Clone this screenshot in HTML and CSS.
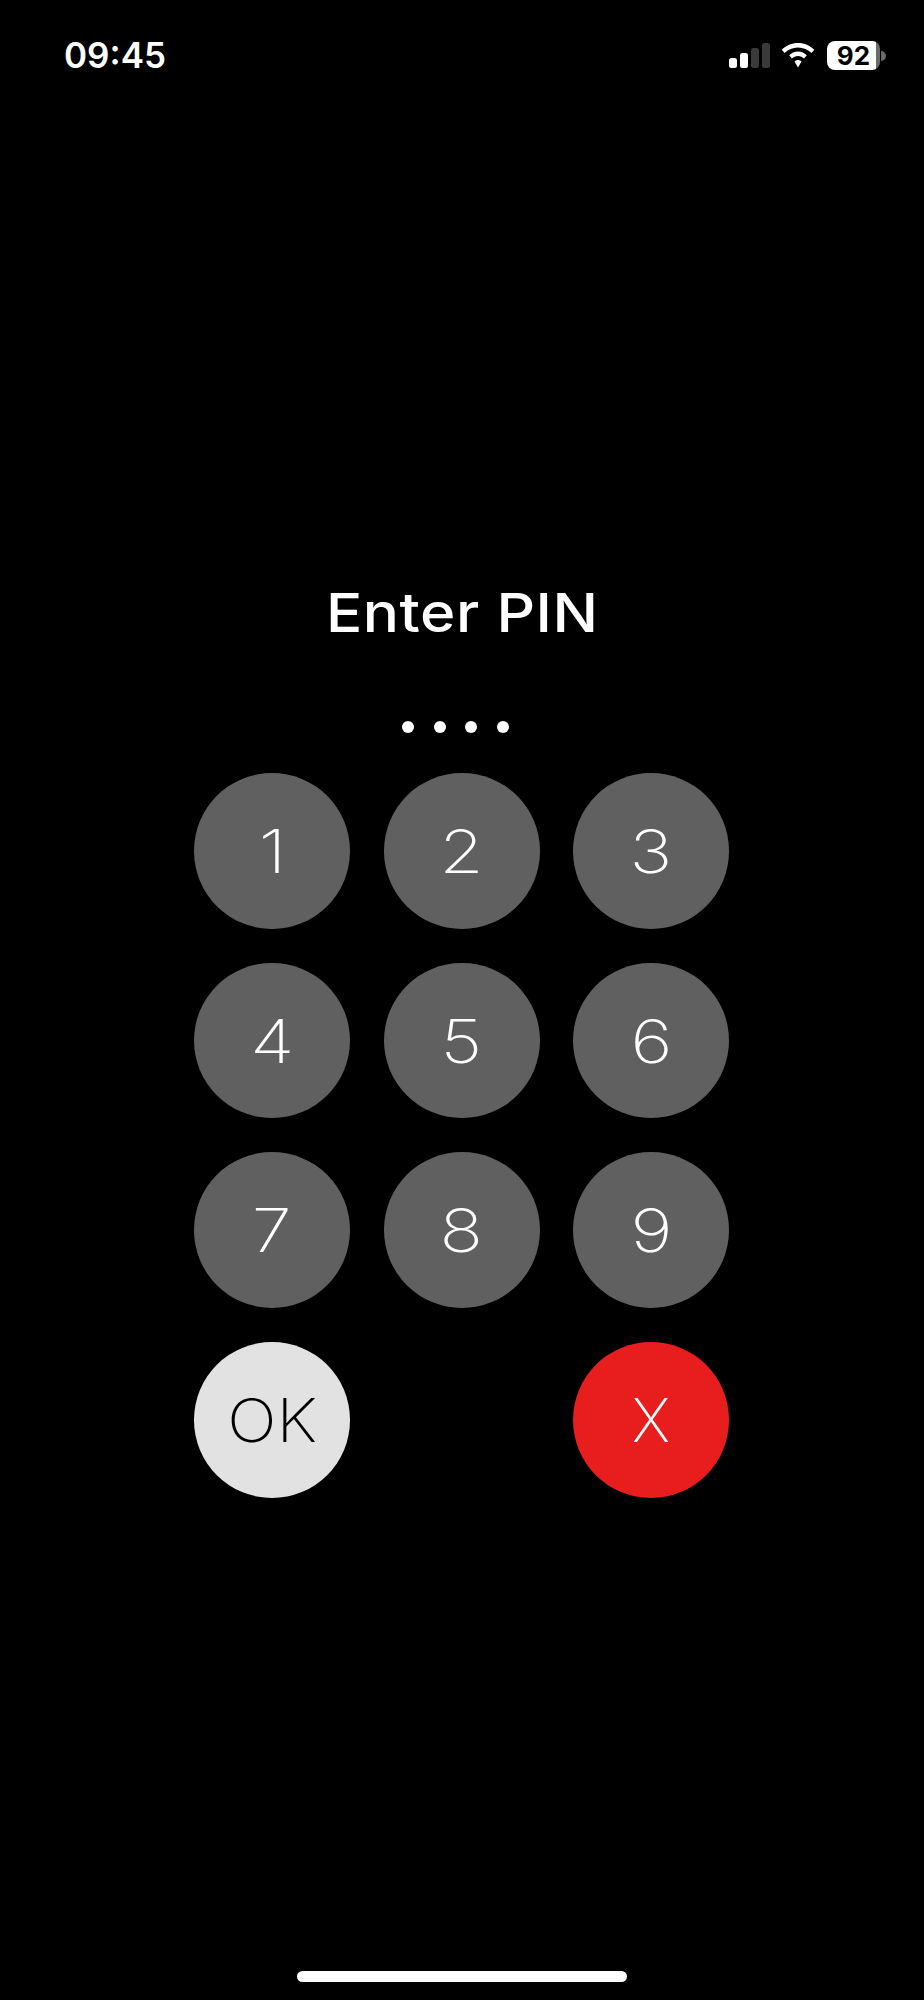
FILE: index.html
```html
<!DOCTYPE html>
<html lang="en">
<head>
<meta charset="utf-8">
<title>Enter PIN</title>
<link rel="stylesheet" href="styles.css">
</head>
<body>
<div class="screen">
  <header class="status">
    <span class="time">09:45</span>
    <div class="status-icons">
      <div class="signal"><i class="bar b1"></i><i class="bar b2"></i><i class="bar b3"></i><i class="bar b4"></i></div>
      <svg class="wifi" width="34" height="25" viewBox="0 0 36 25" preserveAspectRatio="none"><path fill="#fff" d="M18 0C11.300 0 5.300 2.600 .8 6.800L3.700 10C7.400 6.500 12.400 4.400 18 4.400S28.600 6.500 32.300 10L35.200 6.800C30.700 2.600 24.700 0 18 0ZM18 8.500C14.400 8.500 11.100 9.900 8.700 12.200L11.600 15.400C13.300 13.800 15.500 12.900 18 12.900S22.700 13.800 24.400 15.400L27.300 12.200C24.900 9.900 21.600 8.500 18 8.500ZM18 17C16.600 17 15.300 17.500 14.300 18.500L18 24.600L21.700 18.500C20.700 17.500 19.400 17 18 17Z"/></svg>
      <div class="battery"><span class="battery-body">92</span><i class="battery-tip"></i></div>
    </div>
  </header>
  <main class="pin">
    <h1 class="title">Enter PIN</h1>
    <div class="dots"><i class="dot"></i><i class="dot"></i><i class="dot"></i><i class="dot"></i></div>
    <div class="keypad">
      <button class="key"><span class="num">1</span></button>
      <button class="key"><span class="num">2</span></button>
      <button class="key"><span class="num">3</span></button>
      <button class="key"><span class="num">4</span></button>
      <button class="key"><span class="num">5</span></button>
      <button class="key"><span class="num">6</span></button>
      <button class="key"><span class="num">7</span></button>
      <button class="key"><span class="num">8</span></button>
      <button class="key"><span class="num">9</span></button>
      <button class="key key-ok"><span class="word">OK</span></button>
      <span></span>
      <button class="key key-cancel">X</button>
    </div>
  </main>
  <div class="home-indicator"></div>
</div>
</body>
</html>
```
FILE: styles.css
```css
* { box-sizing: border-box; }
html, body { margin: 0; padding: 0; background: #000; }
.screen {
  width: 924px;
  height: 2000px;
  background: #000;
  color: #fff;
  display: flex;
  flex-direction: column;
  font-family: "Inter", "Liberation Sans", sans-serif;
}
.status {
  height: 110px;
  padding: 36px 38px 0 64px;
  display: flex;
  justify-content: space-between;
  align-items: flex-start;
}
.time { font-size: 35px; font-weight: 600; line-height: 39px; }
.status-icons { display: flex; align-items: flex-end; height: 29px; margin-top: 5px; }
.signal { display: flex; align-items: flex-end; gap: 3px; margin: 0 11px 2px 0; }
.bar { display: block; width: 8px; background: #fff; border-radius: 2.500px; }
.b1 { height: 10px; }
.b2 { height: 15px; }
.b3 { height: 20px; background: #3a3a3a; }
.b4 { height: 25px; background: #3a3a3a; }
.wifi { display: block; margin: 0 12px 2px 0; }
.battery { display: flex; align-items: center; }
.battery-body {
  display: block;
  width: 53px;
  height: 29px;
  border-radius: 8px;
  background: linear-gradient(to right, #fff 92%, #6a6a6a 92%);
  color: #000;
  font-size: 26px;
  font-weight: 700;
  line-height: 29px;
  text-align: center;
}
.battery-tip { display: block; width: 5px; height: 10px; margin-left: 1px; background: #6a6a6a; border-radius: 0 5px 5px 0; }
.pin { display: flex; flex-direction: column; flex: 1; }
.title {
  align-self: center;
  margin: 470.500px 0 0;
  font-size: 54px;
  font-weight: 550;
  line-height: 64px;
  letter-spacing: 0.500px;
  transform: scaleX(1.115);
}
.dots { display: flex; margin: 76.500px 0 0 402px; gap: 19.500px; }
.dot { display: block; width: 12px; height: 12px; border-radius: 50%; background: #fff; }
.keypad {
  display: grid;
  grid-template-columns: repeat(3, 156px);
  grid-auto-rows: 155.700px;
  column-gap: 33.500px;
  row-gap: 34px;
  margin: 40px 0 0 194px;
}
.key {
  border: 0;
  padding: 0;
  border-radius: 50%;
  background: #606060;
  color: #fff;
  font: 250 60px/1 "Inter", "Liberation Sans", sans-serif;
}
.num { display: inline-block; transform: scaleX(1.2); }
.word { display: inline-block; transform: scaleX(1.09); }
.key-ok { background: #e2e2e2; color: #000; }
.key-cancel { background: #e81e1e; }
.home-indicator {
  width: 330px;
  height: 11px;
  margin: 0 0 18px 297px;
  border-radius: 6px;
  background: #fff;
}
```
